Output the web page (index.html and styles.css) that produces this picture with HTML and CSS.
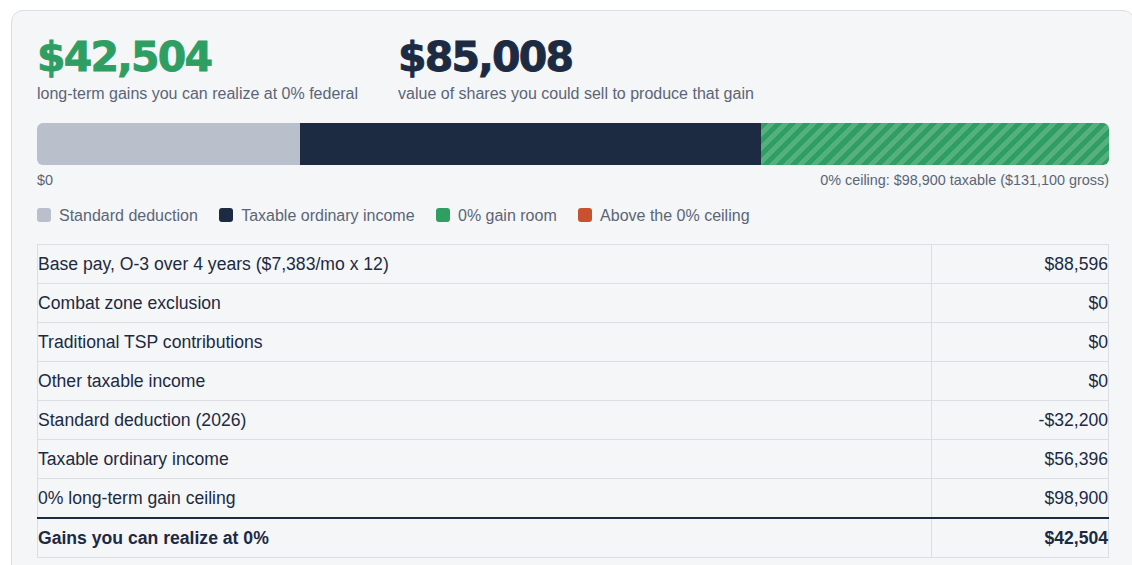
FILE: index.html
```html
<!DOCTYPE html>
<html lang="en">
<head>
<meta charset="utf-8">
<title>0% gain room</title>
<link rel="stylesheet" href="styles.css">
</head>
<body>
<div class="card">
  <div class="stats">
    <div class="stat">
      <div class="stat-value green">$42,504</div>
      <div class="stat-label">long-term gains you can realize at 0% federal</div>
    </div>
    <div class="stat">
      <div class="stat-value navy">$85,008</div>
      <div class="stat-label">value of shares you could sell to produce that gain</div>
    </div>
  </div>

  <div class="bar">
    <div class="seg seg-deduction" style="width: 24.56%"></div>
    <div class="seg seg-ordinary" style="width: 43.02%"></div>
    <div class="seg seg-room" style="width: 32.42%"></div>
  </div>
  <div class="axis">
    <span>$0</span>
    <span>0% ceiling: $98,900 taxable ($131,100 gross)</span>
  </div>

  <div class="legend">
    <div class="legend-item"><span class="swatch sw-deduction"></span>Standard deduction</div>
    <div class="legend-item"><span class="swatch sw-ordinary"></span>Taxable ordinary income</div>
    <div class="legend-item"><span class="swatch sw-room"></span>0% gain room</div>
    <div class="legend-item"><span class="swatch sw-above"></span>Above the 0% ceiling</div>
  </div>

  <table class="breakdown">
    <tbody>
      <tr><td class="label">Base pay, O-3 over 4 years ($7,383/mo x 12)</td><td class="val">$88,596</td></tr>
      <tr><td class="label">Combat zone exclusion</td><td class="val">$0</td></tr>
      <tr><td class="label">Traditional TSP contributions</td><td class="val">$0</td></tr>
      <tr><td class="label">Other taxable income</td><td class="val">$0</td></tr>
      <tr><td class="label">Standard deduction (2026)</td><td class="val">-$32,200</td></tr>
      <tr><td class="label">Taxable ordinary income</td><td class="val">$56,396</td></tr>
      <tr><td class="label">0% long-term gain ceiling</td><td class="val">$98,900</td></tr>
      <tr class="total"><td class="label">Gains you can realize at 0%</td><td class="val">$42,504</td></tr>
    </tbody>
  </table>
</div>
</body>
</html>
```

FILE: styles.css
```css
html {
  overflow: hidden;
}

body {
  margin: 10px 0 0 11px;
  background: #ffffff;
  font-family: "Liberation Sans", Arial, sans-serif;
  color: #1c2a42;
}

.card {
  width: 1072px;
  padding: 26px 25px 40px 25px;
  background: #f5f6f8;
  border: 1px solid #dcdee4;
  border-radius: 12px;
}

.stats {
  display: flex;
  gap: 40px;
}

.stat-value {
  font-family: "DejaVu Sans", "Liberation Sans", sans-serif;
  font-weight: bold;
  font-size: 41px;
  line-height: 41px;
  letter-spacing: -1.8px;
  -webkit-text-stroke: 0.9px currentColor;
}

.green {
  color: #2e9e63;
}

.navy {
  color: #1c2a42;
}

.stat-label {
  margin-top: 6px;
  font-size: 16px;
  line-height: 19.2px;
  color: #5b6576;
}

.bar {
  display: flex;
  height: 41.5px;
  margin-top: 20px;
  border-radius: 6px;
  overflow: hidden;
}

.seg {
  height: 100%;
}

.seg-deduction {
  background: #b9c0cb;
}

.seg-ordinary {
  background: #1c2a42;
}

.seg-room {
  background: repeating-linear-gradient(135deg, #2e9e63 0 5px, #55af7e 5px 10px);
}

.axis {
  display: flex;
  justify-content: space-between;
  margin-top: 7.3px;
  font-size: 14.4px;
  line-height: 17.3px;
  color: #5b6576;
}

.legend {
  display: flex;
  gap: 21.4px;
  margin-top: 16.5px;
  font-size: 16px;
  line-height: 19.2px;
  color: #5b6576;
}

.legend-item {
  display: flex;
  align-items: center;
  gap: 8px;
}

.swatch {
  width: 14px;
  height: 14px;
  border-radius: 3px;
  margin-top: -1px;
}

.sw-deduction {
  background: #b9c0cb;
}

.sw-ordinary {
  background: #1c2a42;
}

.sw-room {
  background: #2e9e63;
}

.sw-above {
  background: #c8522f;
}

.breakdown {
  width: 100%;
  margin-top: 18.5px;
  border-collapse: collapse;
  font-size: 17.6px;
  line-height: 22px;
  color: #1c2a42;
}

.breakdown td {
  padding: 8px 0;
  border: 1px solid #dcdee4;
}

.breakdown .val {
  width: 176px;
  text-align: right;
}

.breakdown .total td {
  border-top: 2px solid #1c2a42;
  font-weight: bold;
}
```
